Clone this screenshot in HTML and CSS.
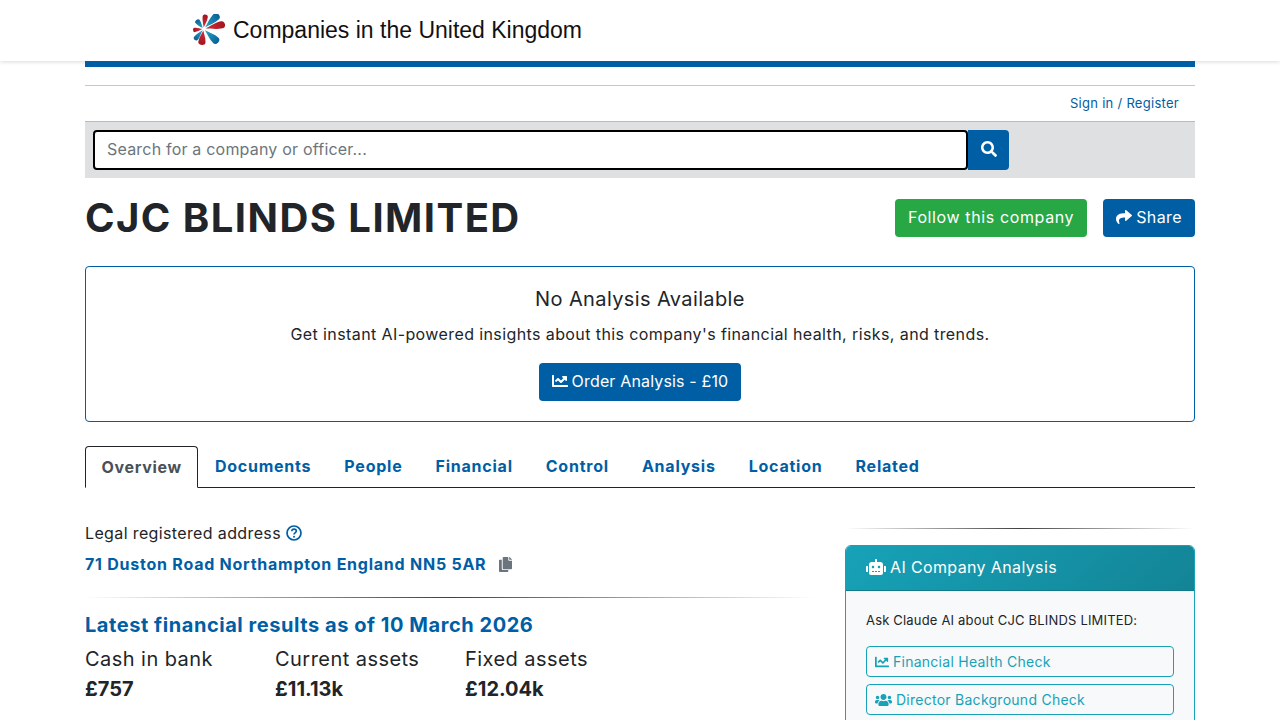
FILE: index.html
```html
<!DOCTYPE html>
<html>
<head>
  <meta charset="UTF-8">
  <title>CJC BLINDS LIMITED</title>
  <link rel="stylesheet" href="styles.css">
</head>
<body>
  <header class="site-header">
    <div class="logo">
      <svg class="logo-mark" viewBox="0 0 32 32" width="32" height="32">
        <defs>
          <path id="petal" d="M1 0C3 -.3 6 -1 8.500 -1C10.500 -1 10.500 1 8.500 1C6 1 3 .3 1 0Z"/>
          <linearGradient id="blueFill" x1="0" x2="1" y1="0" y2="0">
            <stop offset="0" stop-color="#27a6c6"/>
            <stop offset="1" stop-color="#0b5f96"/>
          </linearGradient>
          <linearGradient id="redFill" x1="0" x2="1" y1="0" y2="0">
            <stop offset="0" stop-color="#d0303a"/>
            <stop offset="1" stop-color="#a3141f"/>
          </linearGradient>
        </defs>
        <g transform="translate(10.500 15)">
          <use href="#petal" fill="url(#blueFill)" transform="rotate(-44) scale(2.100 3.800)"/>
          <use href="#petal" fill="url(#redFill)" transform="rotate(-13) scale(2.200 3.600)"/>
          <use href="#petal" fill="url(#blueFill)" transform="rotate(43) scale(2 3.800)"/>
          <use href="#petal" fill="url(#redFill)" transform="rotate(97) scale(1.600 3.600)"/>
          <use href="#petal" fill="url(#blueFill)" transform="rotate(129) scale(1.400 2.400)"/>
          <use href="#petal" fill="url(#redFill)" transform="rotate(174) scale(1.050 2.200)"/>
          <use href="#petal" fill="url(#blueFill)" transform="rotate(232) scale(1.150 2.600)"/>
          <use href="#petal" fill="url(#redFill)" transform="rotate(278) scale(1.450 2.600)"/>
        </g>
      </svg>
      <span class="logo-text">Companies in the United Kingdom</span>
    </div>
  </header>

  <div class="container">
    <div class="blue-bar"></div>
    <div class="account-row">
      <a href="#" class="sign-in">Sign in / Register</a>
    </div>

    <form class="search-band">
      <input class="search-input" type="text" placeholder="Search for a company or officer...">
      <button class="search-btn" type="button" title="Search">
        <svg viewBox="0 0 512 512" width="16" height="16"><path fill="#fff" d="M505 442.700L405.300 343c-4.500-4.500-10.600-7-17-7H372c27.600-35.300 44-79.700 44-128C416 93.100 322.900 0 208 0S0 93.100 0 208s93.100 208 208 208c48.300 0 92.700-16.400 128-44v16.300c0 6.400 2.500 12.500 7 17l99.700 99.700c9.400 9.400 24.600 9.400 33.900 0l28.300-28.300c9.400-9.400 9.400-24.600.1-34zM208 336c-70.700 0-128-57.200-128-128 0-70.700 57.200-128 128-128 70.700 0 128 57.200 128 128 0 70.700-57.200 128-128 128z"/></svg>
      </button>
    </form>

    <div class="title-row">
      <h1>CJC BLINDS LIMITED</h1>
      <div class="title-actions">
        <a href="#" class="btn btn-green">Follow this company</a>
        <a href="#" class="btn btn-blue">
          <svg viewBox="0 0 512 512" width="16" height="16"><path fill="#fff" d="M503.700 189.800L327.700 37.900C312.300 24.500 288 35.300 288 56v80.100C127.400 137.900 0 170.100 0 322.300c0 61.400 39.600 122.300 83.300 154.100 13.700 9.900 33.100-2.500 28.100-18.600C66 312.500 132.900 274.300 288 272.100V360c0 20.700 24.300 31.500 39.700 18.200l176-152c11.100-9.600 11.100-26.800 0-36.400z"/></svg>
          Share
        </a>
      </div>
    </div>

    <section class="analysis-box">
      <h2>No Analysis Available</h2>
      <p>Get instant AI-powered insights about this company's financial health, risks, and trends.</p>
      <a href="#" class="btn btn-blue">
        <svg viewBox="0 0 512 512" width="16" height="16"><path fill="#fff" d="M496 384H64V80c0-8.840-7.160-16-16-16H16C7.160 64 0 71.160 0 80v336c0 17.670 14.330 32 32 32h464c8.840 0 16-7.160 16-16v-32c0-8.840-7.160-16-16-16zM464 96H346.020c-21.380 0-32.090 25.850-16.970 40.970l32.400 32.400L288 242.750l-73.370-73.370c-12.500-12.500-32.760-12.500-45.250 0l-68.690 68.690c-6.250 6.250-6.250 16.380 0 22.630l22.620 22.620c6.250 6.250 16.380 6.250 22.630 0L192 237.250l73.370 73.370c12.500 12.500 32.760 12.500 45.250 0l96-96 32.400 32.400c15.120 15.120 40.970 4.410 40.970-16.970V112c.01-8.840-7.150-16-15.990-16z"/></svg>
        Order Analysis - £10
      </a>
    </section>

    <nav class="tabs">
      <a href="#" class="tab active">Overview</a>
      <a href="#" class="tab">Documents</a>
      <a href="#" class="tab">People</a>
      <a href="#" class="tab">Financial</a>
      <a href="#" class="tab">Control</a>
      <a href="#" class="tab">Analysis</a>
      <a href="#" class="tab">Location</a>
      <a href="#" class="tab">Related</a>
    </nav>

    <div class="columns">
      <main class="main-col">
        <div class="address-label">
          Legal registered address
          <svg class="help-icon" viewBox="0 0 16 16" width="16" height="16"><circle cx="8" cy="8" r="7" fill="none" stroke="#005ea5" stroke-width="1.700"/><path d="M5.800 6.200c0-1.300 1-2.100 2.300-2.100s2.200.8 2.200 2c0 1.900-2.300 1.700-2.300 3.500" fill="none" stroke="#005ea5" stroke-width="1.600"/><circle cx="8" cy="11.800" r="1" fill="#005ea5"/></svg>
        </div>
        <div class="address-row">
          <a href="#" class="address-link">71 Duston Road Northampton England NN5 5AR</a>
          <svg class="copy-icon" viewBox="0 0 448 512" width="13" height="15"><path fill="#6c757d" d="M320 448v40c0 13.300-10.700 24-24 24H24c-13.300 0-24-10.700-24-24V120c0-13.300 10.700-24 24-24h72v296c0 30.900 25.100 56 56 56h168zm0-344V0H152c-13.300 0-24 10.700-24 24v368c0 13.300 10.700 24 24 24h272c13.300 0 24-10.700 24-24V128H344c-13.200 0-24-10.800-24-24zm120.970-31.030L375.030 7.030A24 24 0 0 0 358.060 0H352v96h96v-6.060a24 24 0 0 0-7.030-16.970z"/></svg>
        </div>
        <hr class="fade-rule">
        <h3 class="results-title">Latest financial results as of 10 March 2026</h3>
        <div class="stats">
          <div class="stat"><div class="stat-label">Cash in bank</div><div class="stat-value">£757</div></div>
          <div class="stat"><div class="stat-label">Current assets</div><div class="stat-value">£11.13k</div></div>
          <div class="stat"><div class="stat-label">Fixed assets</div><div class="stat-value">£12.04k</div></div>
        </div>
      </main>

      <aside class="side-col">
        <hr class="fade-rule side-rule">
        <div class="ai-card">
          <div class="ai-card-head">
            <svg viewBox="0 0 640 512" width="20" height="16"><path fill="#fff" d="M32 224h32v192H32c-17.700 0-32-14.300-32-32V256c0-17.700 14.300-32 32-32zm512-48v272c0 35.300-28.700 64-64 64H160c-35.300 0-64-28.700-64-64V176c0-44.200 35.800-80 80-80h112V32c0-17.700 14.300-32 32-32s32 14.300 32 32v64h112c44.200 0 80 35.800 80 80zM264 256c0-22.100-17.900-40-40-40s-40 17.900-40 40 17.900 40 40 40 40-17.900 40-40zm-8 128h-64v32h64v-32zm96 0h-64v32h64v-32zm104-128c0-22.100-17.900-40-40-40s-40 17.900-40 40 17.900 40 40 40 40-17.900 40-40zm-8 128h-64v32h64v-32zm192-128v128c0 17.700-14.300 32-32 32h-32V224h32c17.700 0 32 14.300 32 32z"/></svg>
            AI Company Analysis
          </div>
          <div class="ai-card-body">
            <p>Ask Claude AI about CJC BLINDS LIMITED:</p>
            <a href="#" class="ai-link">
              <svg viewBox="0 0 512 512" width="14" height="14"><path fill="#17a2b8" d="M496 384H64V80c0-8.840-7.160-16-16-16H16C7.160 64 0 71.160 0 80v336c0 17.670 14.330 32 32 32h464c8.840 0 16-7.160 16-16v-32c0-8.840-7.160-16-16-16zM464 96H346.020c-21.380 0-32.090 25.850-16.970 40.970l32.400 32.400L288 242.750l-73.370-73.370c-12.500-12.500-32.760-12.500-45.250 0l-68.690 68.690c-6.250 6.250-6.250 16.380 0 22.630l22.620 22.620c6.250 6.250 16.380 6.250 22.630 0L192 237.250l73.370 73.370c12.500 12.500 32.760 12.500 45.250 0l96-96 32.400 32.400c15.120 15.120 40.970 4.410 40.970-16.970V112c.01-8.840-7.150-16-15.990-16z"/></svg>
              Financial Health Check
            </a>
            <a href="#" class="ai-link">
              <svg viewBox="0 0 640 512" width="17" height="14"><path fill="#17a2b8" d="M96 224c35.300 0 64-28.700 64-64s-28.700-64-64-64-64 28.700-64 64 28.700 64 64 64zm448 0c35.300 0 64-28.700 64-64s-28.700-64-64-64-64 28.700-64 64 28.700 64 64 64zm32 32h-64c-17.600 0-33.500 7.100-45.100 18.600 40.300 22.100 68.900 62 75.100 109.400h66c17.700 0 32-14.300 32-32v-32c0-35.300-28.700-64-64-64zm-256 0c61.900 0 112-50.100 112-112S381.900 32 320 32 208 82.100 208 144s50.100 112 112 112zm76.800 32h-8.300c-20.800 10-43.900 16-68.500 16s-47.600-6-68.500-16h-8.300C179.600 288 128 339.600 128 403.200V432c0 26.500 21.500 48 48 48h288c26.500 0 48-21.500 48-48v-28.800c0-63.600-51.600-115.200-115.200-115.200zm-223.700-13.400C161.500 263.100 145.600 256 128 256H64c-35.300 0-64 28.700-64 64v32c0 17.700 14.300 32 32 32h65.900c6.300-47.400 34.900-87.300 75.200-109.400z"/></svg>
              Director Background Check
            </a>
          </div>
        </div>
      </aside>
    </div>
  </div>
</body>
</html>
```

FILE: styles.css
```css
html, body {
  height: 720px;
  overflow: hidden;
}
body {
  margin: 0;
  font-family: Inter, 'Open Sans', sans-serif;
  font-size: 16px;
  color: #212529;
  background: #fff;
}
a {
  color: #005ea5;
  text-decoration: none;
}
.site-header {
  height: 61px;
  background: #fff;
  box-shadow: 0 1px 4px rgba(0,0,0,0.15);
}
.logo {
  display: flex;
  align-items: center;
  gap: 8px;
  height: 60px;
  padding-left: 193px;
}
.logo-text {
  font-family: 'Liberation Sans', Arial, sans-serif;
  font-size: 23px;
  color: #111;
}
.container {
  width: 1110px;
  margin: 0 auto;
}
.blue-bar {
  height: 6px;
  background: #005ea5;
}
.account-row {
  display: flex;
  justify-content: flex-end;
  height: 35px;
  margin-top: 18px;
  padding-right: 16px;
  border-top: 1px solid #c8c8c8;
  align-items: center;
}
.sign-in {
  font-size: 13px;
  letter-spacing: 0.28px;
  margin-bottom: 2px;
}
.search-band {
  display: flex;
  height: 57px;
  padding: 8px;
  box-sizing: border-box;
  background: #dee0e2;
  border-top: 1px solid #bbb;
}
.search-input {
  width: 875px;
  height: 40px;
  padding: 0 12px 2px;
  box-sizing: border-box;
  border: 2px solid #000;
  border-radius: 4px;
  font-family: inherit;
  font-size: 16px;
  letter-spacing: 0.2px;
  color: #495057;
}
.search-input::placeholder {
  color: #6c757d;
}
.search-btn {
  width: 41px;
  height: 40px;
  padding: 0;
  border: none;
  border-radius: 0 4px 4px 0;
  background: #005ea5;
}
.title-row {
  display: flex;
  justify-content: space-between;
  align-items: flex-start;
  margin-top: 16px;
}
h1 {
  margin: 0;
  font-size: 40px;
  line-height: 48px;
  font-weight: 700;
  letter-spacing: 1.45px;
}
.title-actions {
  display: flex;
  gap: 16px;
  margin-top: 5px;
}
.btn {
  display: inline-flex;
  align-items: center;
  gap: 4px;
  height: 38px;
  padding: 0 13px 2px;
  box-sizing: border-box;
  border-radius: 4px;
  color: #fff;
  font-size: 16px;
}
.btn-green {
  background: #28a745;
  letter-spacing: 0.62px;
}
.title-actions .btn-blue {
  letter-spacing: 0.4px;
}
.analysis-box .btn {
  letter-spacing: 0.16px;
}
.btn-blue {
  background: #005ea5;
}
.analysis-box {
  margin-top: 24px;
  height: 156px;
  box-sizing: border-box;
  padding-top: 19px;
  border: 1px solid #005ea5;
  border-radius: 4px;
  text-align: center;
}
.analysis-box h2 {
  margin: 0 0 10px;
  font-size: 20px;
  line-height: 26px;
  font-weight: 400;
  letter-spacing: 0.38px;
}
.analysis-box p {
  margin: 0 0 17px;
  line-height: 24px;
  letter-spacing: 0.4px;
}
.tabs {
  display: flex;
  margin-top: 24px;
  height: 41px;
  border-bottom: 1px solid #212529;
}
.tab {
  height: 41px;
  padding: 0 15.5px 1px;
  display: flex;
  align-items: center;
  box-sizing: border-box;
  font-weight: 700;
  letter-spacing: 0.77px;
  border: 1px solid transparent;
  border-radius: 4px 4px 0 0;
}
.tab.active {
  height: 42px;
  color: #495057;
  background: #fff;
  border-color: #212529 #212529 #fff;
  letter-spacing: 0.7px;
}
.columns {
  display: flex;
  gap: 30px;
  margin-top: 32px;
}
.main-col {
  width: 730px;
}
.side-col {
  width: 350px;
}
.address-label {
  display: flex;
  align-items: center;
  gap: 5px;
  height: 26px;
  letter-spacing: 0.37px;
}
.address-row {
  display: flex;
  align-items: center;
  gap: 13px;
  margin-top: 6px;
  height: 24px;
}
.address-link {
  font-weight: 700;
  letter-spacing: 0.76px;
}
.fade-rule {
  height: 1px;
  margin: 21px 0 0;
  border: none;
  background: linear-gradient(to right, rgba(0,0,0,0), rgba(0,0,0,0.75), rgba(0,0,0,0));
}
.results-title {
  margin: 13px 0 0;
  font-size: 20px;
  line-height: 28px;
  font-weight: 700;
  letter-spacing: 0.55px;
  color: #005ea5;
}
.stats {
  display: flex;
  margin-top: 6px;
}
.stat {
  width: 190px;
}
.stat-label {
  font-size: 20px;
  line-height: 28px;
  letter-spacing: 0.45px;
}
.stat-value {
  margin-top: 1px;
  font-size: 20px;
  line-height: 30px;
  font-weight: 700;
}
.side-rule {
  margin: 8px 0 0;
}
.ai-card {
  margin-top: 16px;
  border: 1px solid #17a2b8;
  border-radius: 6px;
  background: #f8f9fa;
  overflow: hidden;
}
.ai-card-head {
  display: flex;
  align-items: center;
  gap: 4px;
  height: 45px;
  padding: 0 0 2px 20px;
  box-sizing: border-box;
  color: #fff;
  font-size: 16px;
  letter-spacing: 0.37px;
  background: linear-gradient(135deg, #17a2b8, #138496);
  border-bottom: 1px solid #0f7a8a;
}
.ai-card-body {
  padding: 19px 20px 20px;
}
.ai-card-body p {
  margin: 0 0 16px;
  font-size: 13px;
  line-height: 20px;
  letter-spacing: 0.18px;
}
.ai-link {
  display: flex;
  align-items: center;
  gap: 4px;
  height: 31px;
  margin-bottom: 7px;
  padding-left: 8px;
  box-sizing: border-box;
  border: 1px solid #17a2b8;
  border-radius: 4px;
  font-size: 14px;
  letter-spacing: 0.26px;
  color: #17a2b8;
}
```
